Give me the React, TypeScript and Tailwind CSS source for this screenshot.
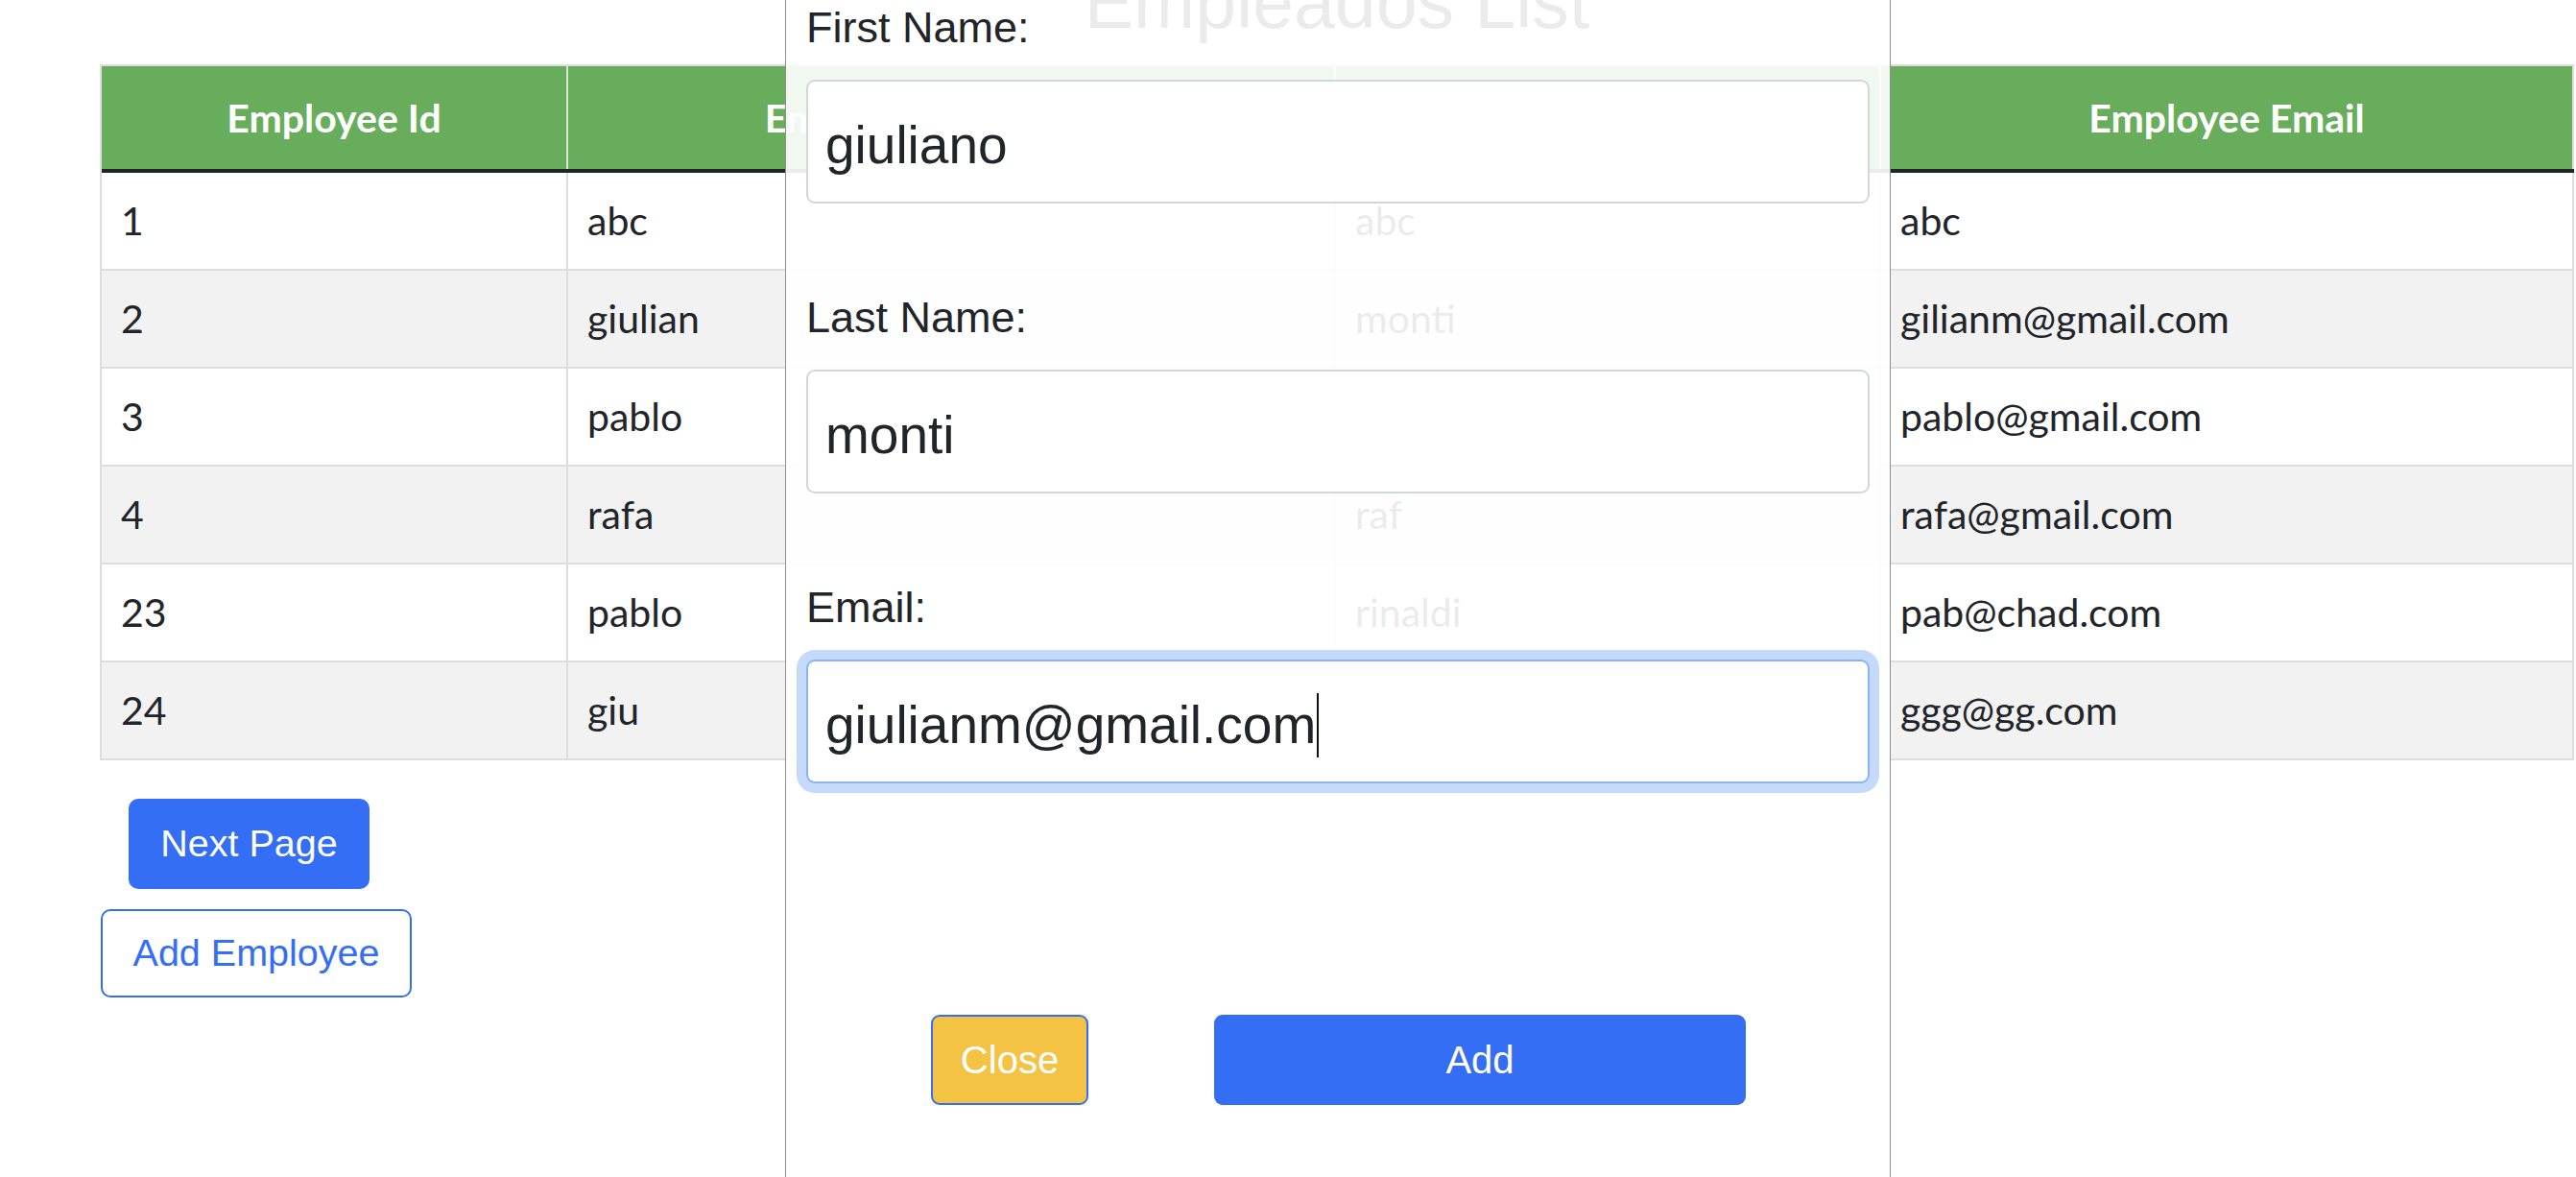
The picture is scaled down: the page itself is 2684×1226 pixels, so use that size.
import React from "react";

const rows = [
  { id: "1", first: "abc", last: "abc", email: "abc" },
  { id: "2", first: "giulian", last: "monti", email: "gilianm@gmail.com" },
  { id: "3", first: "pablo", last: "perez", email: "pablo@gmail.com" },
  { id: "4", first: "rafa", last: "raf", email: "rafa@gmail.com" },
  { id: "23", first: "pablo", last: "rinaldi", email: "pab@chad.com" },
  { id: "24", first: "giu", last: "gg", email: "ggg@gg.com" },
];

const headers = ["Employee Id", "Employee First Name", "Employee Last Name", "Employee Email"];

function Field({ label, value, focused, first }: { label: string; value: string; focused?: boolean; first?: boolean }) {
  return (
    <div className="flex flex-col">
      <div
        className={
          (first ? "mt-[3px] " : "mt-[93px] ") +
          "h-[52px] text-[45px] leading-[52px] text-[#212529]"
        }
      >
        {label}
      </div>
      <div
        className={
          "mt-[28px] flex h-[129px] items-center rounded-[9px] border-2 bg-white pl-[18px] pt-[7px] text-[55px] text-[#212529] " +
          (focused
            ? "border-[#8ab4f8] shadow-[0_0_0_10px_#c5d9fb]"
            : "border-[#d3d6da]")
        }
      >
        <span className="leading-none">{value}</span>
        {focused ? <span className="ml-[1px] h-[67px] w-[2px] bg-[#111]" /> : null}
      </div>
    </div>
  );
}

export default function App() {
  return (
    <div className="relative h-[1226px] w-[2684px] overflow-hidden bg-white [font-family:'Liberation_Sans',Arial,sans-serif]">
      <div className="ml-[104px] w-[2578px]">
        <h2 className="-mt-[36px] h-[77px] text-center text-[77px] font-normal leading-[77px] text-[#212529]">
          Empleados List
        </h2>
        <div className="mt-[26px] border-l-2 border-t-2 border-[#dddddd] [font-family:Lato,sans-serif]">
          <div className="grid h-[111px] grid-cols-[486px_800px_568px_722px] border-b-4 border-[#212529] bg-[#67ad5b]">
            {headers.map((h) => (
              <div
                key={h}
                className="flex items-center justify-center border-r-2 border-[#d9e6d6] text-[41px] font-bold text-white"
              >
                {h}
              </div>
            ))}
          </div>
          {rows.map((r, i) => (
            <div
              key={r.id}
              className={
                "grid h-[102px] grid-cols-[486px_800px_568px_722px] border-b-2 border-[#dddddd] text-[41px] text-[#212529] " +
                (i % 2 === 1 ? "bg-[#f2f2f2]" : "bg-white")
              }
            >
              <div className="flex items-center border-r-2 border-[#dddddd] px-[20px]">{r.id}</div>
              <div className="flex items-center border-r-2 border-[#dddddd] px-[20px]">{r.first}</div>
              <div className="flex items-center border-r-2 border-[#dddddd] px-[20px]">{r.last}</div>
              <div className="flex items-center border-r-2 border-[#dddddd] px-[20px]">{r.email}</div>
            </div>
          ))}
        </div>
        <div className="flex flex-col items-start">
          <button className="ml-[30px] mt-[40px] flex h-[94px] w-[251px] items-center justify-center rounded-[10px] bg-[#336ef5] text-[39.5px] text-white">
            Next Page
          </button>
          <button className="ml-[1px] mt-[21px] flex h-[92px] w-[324px] items-center justify-center rounded-[10px] border-2 border-[#336ef5] bg-white text-[39.5px] text-[#336ef5]">
            Add Employee
          </button>
        </div>
      </div>

      <div className="absolute left-[818px] top-0 flex h-[1226px] w-[1152px] flex-col border-x border-[#8e8e8e] bg-white/[0.91] px-[21px]">
        <Field label="First Name:" value="giuliano" first />
        <Field label="Last Name:" value="monti" />
        <Field label="Email:" value="giulianm@gmail.com" focused />
        <div className="mt-[241px] flex">
          <button className="ml-[130px] flex h-[94px] w-[164px] items-center justify-center rounded-[9px] border-2 border-[#336ef5] bg-[#f4c343] text-[40px] text-white">
            Close
          </button>
          <button className="ml-[131px] flex h-[94px] w-[554px] items-center justify-center rounded-[9px] bg-[#336ef5] text-[40px] text-white">
            Add
          </button>
        </div>
      </div>
    </div>
  );
}
